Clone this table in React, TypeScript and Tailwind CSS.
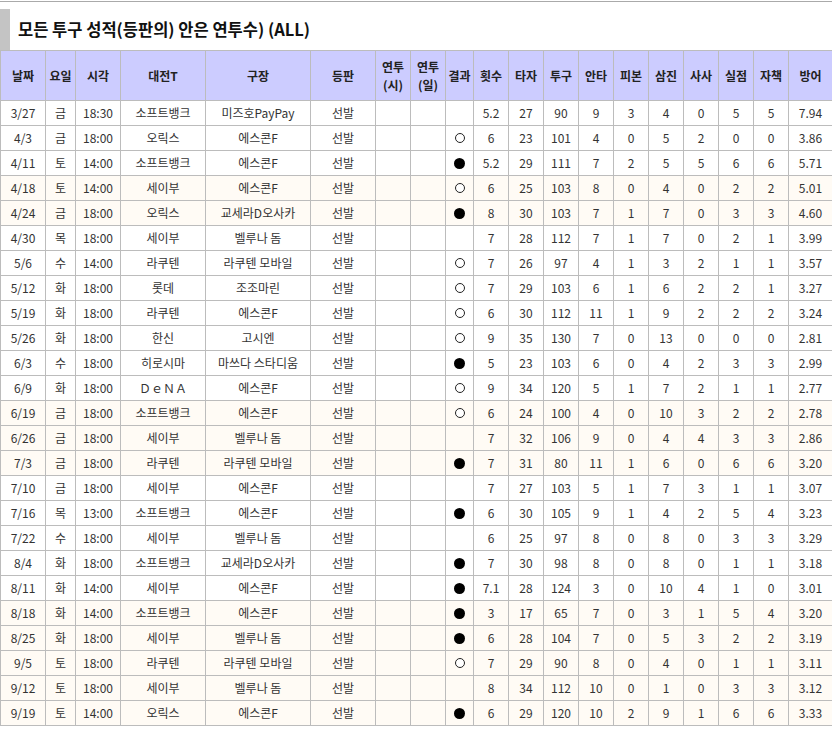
import React from 'react';

type Row = {
  date: string;
  day: string;
  time: string;
  team: string;
  park: string;
  role: string;
  result: '' | 'W' | 'L';
  stats: string[];
  cream?: boolean;
};

const rows: Row[] = [
  { date: '3/27', day: '금', time: '18:30', team: '소프트뱅크', park: '미즈호PayPay', role: '선발', result: '', stats: ['5.2', '27', '90', '9', '3', '4', '0', '5', '5', '7.94'] },
  { date: '4/3', day: '금', time: '18:00', team: '오릭스', park: '에스콘F', role: '선발', result: 'W', stats: ['6', '23', '101', '4', '0', '5', '2', '0', '0', '3.86'] },
  { date: '4/11', day: '토', time: '14:00', team: '소프트뱅크', park: '에스콘F', role: '선발', result: 'L', stats: ['5.2', '29', '111', '7', '2', '5', '5', '6', '6', '5.71'] },
  { date: '4/18', day: '토', time: '14:00', team: '세이부', park: '에스콘F', role: '선발', result: 'W', stats: ['6', '25', '103', '8', '0', '4', '0', '2', '2', '5.01'], cream: true },
  { date: '4/24', day: '금', time: '18:00', team: '오릭스', park: '교세라D오사카', role: '선발', result: 'L', stats: ['8', '30', '103', '7', '1', '7', '0', '3', '3', '4.60'], cream: true },
  { date: '4/30', day: '목', time: '18:00', team: '세이부', park: '벨루나 돔', role: '선발', result: '', stats: ['7', '28', '112', '7', '1', '7', '0', '2', '1', '3.99'] },
  { date: '5/6', day: '수', time: '14:00', team: '라쿠텐', park: '라쿠텐 모바일', role: '선발', result: 'W', stats: ['7', '26', '97', '4', '1', '3', '2', '1', '1', '3.57'] },
  { date: '5/12', day: '화', time: '18:00', team: '롯데', park: '조조마린', role: '선발', result: 'W', stats: ['7', '29', '103', '6', '1', '6', '2', '2', '1', '3.27'] },
  { date: '5/19', day: '화', time: '18:00', team: '라쿠텐', park: '에스콘F', role: '선발', result: 'W', stats: ['6', '30', '112', '11', '1', '9', '2', '2', '2', '3.24'] },
  { date: '5/26', day: '화', time: '18:00', team: '한신', park: '고시엔', role: '선발', result: 'W', stats: ['9', '35', '130', '7', '0', '13', '0', '0', '0', '2.81'] },
  { date: '6/3', day: '수', time: '18:00', team: '히로시마', park: '마쓰다 스타디움', role: '선발', result: 'L', stats: ['5', '23', '103', '6', '0', '4', '2', '3', '3', '2.99'] },
  { date: '6/9', day: '화', time: '18:00', team: 'ＤｅＮＡ', park: '에스콘F', role: '선발', result: 'W', stats: ['9', '34', '120', '5', '1', '7', '2', '1', '1', '2.77'] },
  { date: '6/19', day: '금', time: '18:00', team: '소프트뱅크', park: '에스콘F', role: '선발', result: 'W', stats: ['6', '24', '100', '4', '0', '10', '3', '2', '2', '2.78'], cream: true },
  { date: '6/26', day: '금', time: '18:00', team: '세이부', park: '벨루나 돔', role: '선발', result: '', stats: ['7', '32', '106', '9', '0', '4', '4', '3', '3', '2.86'], cream: true },
  { date: '7/3', day: '금', time: '18:00', team: '라쿠텐', park: '라쿠텐 모바일', role: '선발', result: 'L', stats: ['7', '31', '80', '11', '1', '6', '0', '6', '6', '3.20'], cream: true },
  { date: '7/10', day: '금', time: '18:00', team: '세이부', park: '에스콘F', role: '선발', result: '', stats: ['7', '27', '103', '5', '1', '7', '3', '1', '1', '3.07'] },
  { date: '7/16', day: '목', time: '13:00', team: '소프트뱅크', park: '에스콘F', role: '선발', result: 'L', stats: ['6', '30', '105', '9', '1', '4', '2', '5', '4', '3.23'] },
  { date: '7/22', day: '수', time: '18:00', team: '세이부', park: '벨루나 돔', role: '선발', result: '', stats: ['6', '25', '97', '8', '0', '8', '0', '3', '3', '3.29'] },
  { date: '8/4', day: '화', time: '18:00', team: '소프트뱅크', park: '교세라D오사카', role: '선발', result: 'L', stats: ['7', '30', '98', '8', '0', '8', '0', '1', '1', '3.18'] },
  { date: '8/11', day: '화', time: '14:00', team: '세이부', park: '에스콘F', role: '선발', result: 'L', stats: ['7.1', '28', '124', '3', '0', '10', '4', '1', '0', '3.01'] },
  { date: '8/18', day: '화', time: '14:00', team: '소프트뱅크', park: '에스콘F', role: '선발', result: 'L', stats: ['3', '17', '65', '7', '0', '3', '1', '5', '4', '3.20'], cream: true },
  { date: '8/25', day: '화', time: '18:00', team: '세이부', park: '벨루나 돔', role: '선발', result: 'L', stats: ['6', '28', '104', '7', '0', '5', '3', '2', '2', '3.19'], cream: true },
  { date: '9/5', day: '토', time: '18:00', team: '라쿠텐', park: '라쿠텐 모바일', role: '선발', result: 'W', stats: ['7', '29', '90', '8', '0', '4', '0', '1', '1', '3.11'], cream: true },
  { date: '9/12', day: '토', time: '18:00', team: '세이부', park: '벨루나 돔', role: '선발', result: '', stats: ['8', '34', '112', '10', '0', '1', '0', '3', '3', '3.12'], cream: true },
  { date: '9/19', day: '토', time: '14:00', team: '오릭스', park: '에스콘F', role: '선발', result: 'L', stats: ['6', '29', '120', '10', '2', '9', '1', '6', '6', '3.33'], cream: true },
];

const colWidths = [45, 30, 45, 85, 105, 65, 35, 35, 28, 35, 35, 35, 35, 35, 35, 35, 35, 35, 44];

const statHeads = ['횟수', '타자', '투구', '안타', '피본', '삼진', '사사', '실점', '자책', '방어'];

const th = 'border border-[#bcbcbc] bg-[#ccccff] font-bold text-[12px] leading-[18px] text-[#222] text-center p-0';
const td = 'border border-[#bcbcbc] text-center p-0 h-[25px] text-[12px] text-[#333]';

const Mark: React.FC<{ result: Row['result'] }> = ({ result }) => {
  if (result === 'W') {
    return <span className="block w-[10px] h-[10px] rounded-full border border-[#222] bg-white" />;
  }
  if (result === 'L') {
    return <span className="block w-[11px] h-[11px] rounded-full bg-black" />;
  }
  return null;
};

const App: React.FC = () => {
  return (
    <div className="w-[832px] bg-white font-['Noto_Sans_CJK_KR','Noto_Sans',sans-serif] text-[#222]">
      {/* Title */}
      <div className="mt-px border-t border-[#aaaaaa]">
        <div className="mt-[7px] flex h-[41px] items-center border-l-[10px] border-[#c4c4c4] pl-2">
          <h2 className="text-[16.5px] font-bold text-[#111]">모든 투구 성적(등판의) 안은 연투수) (ALL)</h2>
        </div>
      </div>

      {/* Table */}
      <table className="w-[832px] table-fixed border-collapse">
        <colgroup>
          {colWidths.map((w, i) => (
            <col key={i} style={{ width: w }} />
          ))}
        </colgroup>
        <thead>
          <tr className="h-[50px]">
            <th className={th}>날짜</th>
            <th className={th}>요일</th>
            <th className={th}>시각</th>
            <th className={th}>대전T</th>
            <th className={th}>구장</th>
            <th className={th}>등판</th>
            <th className={th}>
              연투
              <br />
              (시)
            </th>
            <th className={th}>
              연투
              <br />
              (일)
            </th>
            <th className={th}>결과</th>
            {statHeads.map((h) => (
              <th key={h} className={th}>
                {h}
              </th>
            ))}
          </tr>
        </thead>
        <tbody>
          {rows.map((r) => (
            <tr key={r.date} className={r.cream ? 'bg-[#fffbf5]' : 'bg-white'}>
              <td className={td}>{r.date}</td>
              <td className={td}>{r.day}</td>
              <td className={td}>{r.time}</td>
              <td className={td}>{r.team}</td>
              <td className={td}>{r.park}</td>
              <td className={td}>{r.role}</td>
              <td className={td}></td>
              <td className={td}></td>
              <td className={td}>
                <div className="flex items-center justify-center">
                  <Mark result={r.result} />
                </div>
              </td>
              {r.stats.map((s, i) => (
                <td key={i} className={td}>
                  {s}
                </td>
              ))}
            </tr>
          ))}
        </tbody>
      </table>
    </div>
  );
};

export default App;
